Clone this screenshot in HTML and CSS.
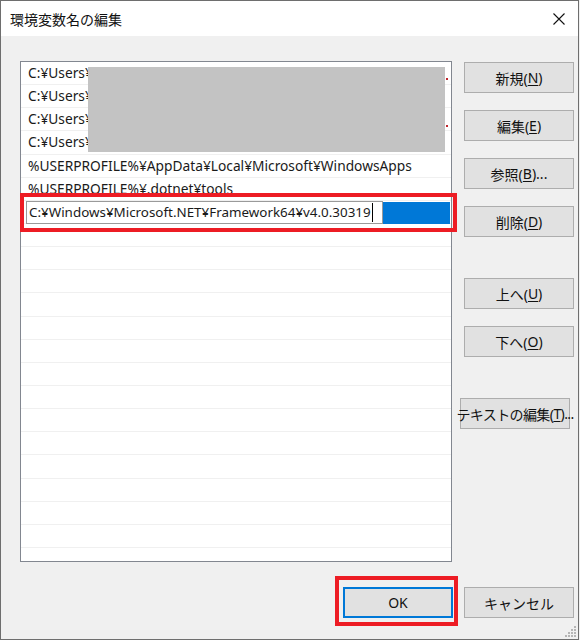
FILE: index.html
```html
<!DOCTYPE html>
<html lang="ja">
<head>
<meta charset="utf-8">
<title>環境変数名の編集</title>
<link rel="stylesheet" href="styles.css">
</head>
<body>
<div class="window">
  <div class="titlebar">
    <span class="title">環境変数名の編集</span>
    <svg class="close" width="12" height="12" viewBox="0 0 12 12"><path d="M0.5 0.5 L11.5 11.5 M11.5 0.5 L0.5 11.5" stroke="#111" stroke-width="1.1" fill="none"/></svg>
  </div>
  <div class="body">
    <div class="list">
      <div class="row">C:¥Users¥</div>
      <div class="row">C:¥Users¥</div>
      <div class="row">C:¥Users¥</div>
      <div class="row">C:¥Users¥</div>
      <div class="row">%USERPROFILE%¥AppData¥Local¥Microsoft¥WindowsApps</div>
      <div class="row">%USERPROFILE%¥.dotnet¥tools</div>
      <div class="row row-edit">
        <div class="edit-input"><span>C:¥Windows¥Microsoft.NET¥Framework64¥v4.0.30319</span><span class="caret"></span></div>
        <div class="selection"></div>
      </div>
      <div class="row"></div>
      <div class="row"></div>
      <div class="row"></div>
      <div class="row"></div>
      <div class="row"></div>
      <div class="row"></div>
      <div class="row"></div>
      <div class="row"></div>
      <div class="row"></div>
      <div class="row"></div>
      <div class="row"></div>
      <div class="row"></div>
      <div class="row"></div>
      <div class="row"></div>
      <div class="row"></div>
    </div>
    <div class="side">
      <div class="btn">新規(<u>N</u>)</div>
      <div class="btn">編集(<u>E</u>)</div>
      <div class="btn">参照(<u>B</u>)...</div>
      <div class="btn">削除(<u>D</u>)</div>
      <div class="btn btn-group">上へ(<u>U</u>)</div>
      <div class="btn">下へ(<u>O</u>)</div>
      <div class="btn btn-group btn-text">テキストの編集(<u>T</u>)...</div>
    </div>
    <div class="footer">
      <div class="btn btn-default">OK</div>
      <div class="btn">キャンセル</div>
    </div>
  </div>

  <div class="redact"></div>
  <div class="red-dot dot-a"></div>
  <div class="red-dot dot-b"></div>
  <div class="annot annot-row"></div>
  <div class="annot annot-ok"></div>
  <svg class="grip" width="12" height="12" viewBox="0 0 12 12">
    <rect x="9" y="0" width="2" height="2" fill="#b5b5b5"/>
    <rect x="6" y="3" width="2" height="2" fill="#b5b5b5"/>
    <rect x="9" y="3" width="2" height="2" fill="#b5b5b5"/>
    <rect x="3" y="6" width="2" height="2" fill="#b5b5b5"/>
    <rect x="6" y="6" width="2" height="2" fill="#b5b5b5"/>
    <rect x="9" y="6" width="2" height="2" fill="#b5b5b5"/>
    <rect x="0" y="9" width="2" height="2" fill="#b5b5b5"/>
    <rect x="3" y="9" width="2" height="2" fill="#b5b5b5"/>
    <rect x="6" y="9" width="2" height="2" fill="#b5b5b5"/>
    <rect x="9" y="9" width="2" height="2" fill="#b5b5b5"/>
  </svg>
</div>
</body>
</html>
```
FILE: styles.css
```css
html, body {
  margin: 0;
  padding: 0;
  background: #f0f0f0;
}

.window {
  position: relative;
  width: 579px;
  height: 640px;
  box-sizing: border-box;
  border: 1px solid #6e6e6e;
  background: #f0f0f0;
  display: flex;
  flex-direction: column;
  font-family: "Noto Sans", "Noto Sans CJK JP", sans-serif;
  color: #000;
  overflow: hidden;
}

.titlebar {
  height: 35px;
  flex: none;
  background: #fff;
  display: flex;
  align-items: center;
  justify-content: space-between;
  padding: 0 13px 0 9px;
}

.title {
  font-family: "Noto Sans CJK JP", sans-serif;
  font-size: 14px;
  color: #111;
}

.close {
  display: block;
  margin-top: 1px;
}

.body {
  display: grid;
  grid-template-columns: 432px 110px;
  column-gap: 12px;
  row-gap: 25px;
  padding: 25px 4px 0 19px;
}

.list {
  height: 501px;
  box-sizing: border-box;
  border: 1px solid #828790;
  background: #fff;
  overflow: hidden;
}

.row {
  height: 23.15px;
  box-sizing: border-box;
  border-bottom: 1px solid #f0f0f0;
  padding-left: 7px;
  font-size: 13.75px;
  line-height: 22px;
  white-space: nowrap;
  color: #1a1a1a;
}

.row-edit {
  display: flex;
  padding-left: 5px;
}

.edit-input {
  width: 357px;
  height: 23px;
  box-sizing: border-box;
  border: 1px solid #9a9a9a;
  background: #fff;
  padding-left: 2px;
  display: flex;
  align-items: center;
  line-height: 20px;
  font-size: 13.4px;
}

.caret {
  display: inline-block;
  width: 1px;
  height: 19px;
  background: #000;
  margin-left: 1px;
}

.selection {
  flex: 1;
  height: 22px;
  margin: 1px 1px 0 0;
  background: #0078d7;
}

.side {
  display: flex;
  flex-direction: column;
  align-items: flex-start;
  gap: 17px;
  padding-top: 1px;
}

.btn {
  width: 110px;
  height: 31px;
  box-sizing: border-box;
  border: 1px solid #adadad;
  background: #e1e1e1;
  display: flex;
  align-items: center;
  justify-content: center;
  font-family: "Noto Sans", "Noto Sans CJK JP", sans-serif;
  font-size: 14px;
  color: #111;
  white-space: nowrap;
}

.btn u {
  text-underline-offset: 2px;
}

.btn-group {
  margin-top: 24px;
}

.btn-text {
  margin-left: -4px;
  letter-spacing: -0.6px;
}

.footer {
  grid-column: 1 / -1;
  display: flex;
  justify-content: flex-end;
  gap: 11px;
}

.btn-default {
  border: 2px solid #0078d7;
}

.redact {
  position: absolute;
  left: 87px;
  top: 66px;
  width: 357px;
  height: 85px;
  background: #c3c3c3;
}

.red-dot {
  position: absolute;
  left: 445px;
  width: 2px;
  height: 2px;
  background: #c0262d;
}

.dot-a { top: 77px; }
.dot-b { top: 124px; }

.annot {
  position: absolute;
  box-sizing: border-box;
  border: 4px solid #ed1c24;
}

.annot-row {
  left: 19px;
  top: 192px;
  width: 437px;
  height: 39px;
}

.annot-ok {
  left: 334px;
  top: 575px;
  width: 123px;
  height: 50px;
}

.grip {
  position: absolute;
  right: 1px;
  bottom: 1px;
}
```
